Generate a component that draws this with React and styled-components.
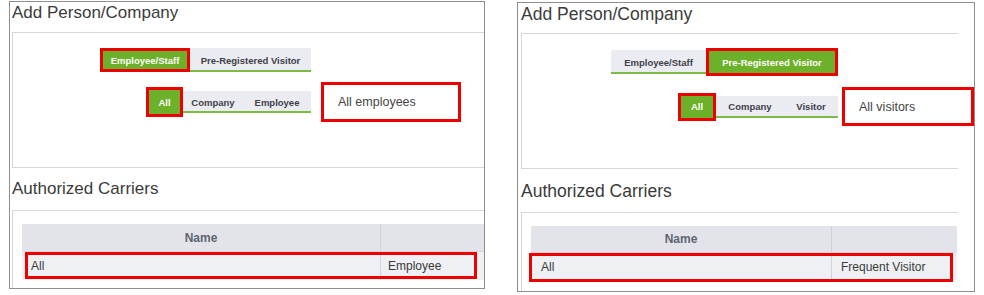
import React from 'react';
import styled, { createGlobalStyle } from 'styled-components';

const GlobalStyle = createGlobalStyle`
  body {
    margin: 0;
    background: #ffffff;
    font-family: "Liberation Sans", Arial, sans-serif;
  }
`;

//page holds the two side by side screenshots
const Page = styled.div`
  display: flex;
  align-items: flex-start;
  gap: ${p => p.gap}px;
  padding: 1px 0 0 9px;
  width: 984px;
  height: 295px;
  box-sizing: border-box;
  overflow: hidden;
`;

const Panel = styled.div`
  display: flex;
  flex-direction: column;
  width: ${p => p.w}px;
  height: ${p => p.h}px;
  margin-top: ${p => p.top}px;
  border: 1px solid #8e8e8e;
  box-sizing: border-box;
  overflow: hidden;
  padding-left: ${p => p.indent}px;
`;

const SectionTitle = styled.div`
  font-size: ${p => p.size}px;
  line-height: 20px;
  color: #3b3b3b;
  margin-top: ${p => p.top}px;
  white-space: nowrap;
`;

const InnerBox = styled.div`
  display: flex;
  flex-direction: column;
  margin-top: ${p => p.top}px;
  margin-right: ${p => p.right}px;
  height: ${p => (p.h ? `${p.h}px` : 'auto')};
  flex: ${p => (p.fill ? 1 : 'none')};
  border: 1px solid #d6d6d6;
  border-right: none;
  border-bottom: ${p => (p.fill ? 'none' : '1px solid #d6d6d6')};
  box-sizing: border-box;
  padding: ${p => p.pad};
`;

//tabs area: tabs column right aligned, description box beside it
const TabGrid = styled.div`
  display: grid;
  grid-template-columns: ${p => p.col}px auto;
  row-gap: ${p => p.gap}px;
  align-items: center;
`;

const TabGroup = styled.div`
  display: flex;
  justify-content: flex-end;
  align-items: center;
`;

const Tab = styled.div`
  display: flex;
  align-items: center;
  justify-content: center;
  width: ${p => p.w}px;
  height: ${p => p.h}px;
  box-sizing: border-box;
  font-size: 9.5px;
  font-weight: bold;
  white-space: nowrap;
  color: ${p => (p.active ? '#ffffff' : '#3e3f48')};
  background: ${p => (p.active ? '#6db02a' : '#ebebf2')};
  border: ${p => (p.active ? '3px solid #ec0000' : 'none')};
  border-bottom: ${p => (p.active ? '3px solid #ec0000' : '2px solid #7dbb42')};
  padding-top: ${p => (p.active ? 0 : 2)}px;
`;

const DescBox = styled.div`
  display: flex;
  align-items: center;
  margin-left: ${p => p.gap}px;
  width: ${p => p.w}px;
  height: ${p => p.h}px;
  box-sizing: border-box;
  border: 3px solid #ec0000;
  padding-left: ${p => p.pad}px;
  font-size: 12.5px;
  color: #454545;
`;

//authorized carriers table
const Table = styled.div`
  display: flex;
  flex-direction: column;
  width: ${p => p.w}px;
`;

const HeadRow = styled.div`
  display: grid;
  grid-template-columns: ${p => p.col}px 1fr;
  height: ${p => p.h}px;
  background: #e2e4ea;
`;

const HeadCell = styled.div`
  display: flex;
  align-items: center;
  justify-content: center;
  font-size: 12px;
  font-weight: bold;
  color: #5e6571;
  & + & {
    border-left: 1px solid #cdd0d8;
  }
`;

const BodyRow = styled.div`
  position: relative;
  display: grid;
  grid-template-columns: ${p => p.col}px 1fr;
  height: ${p => p.h}px;
  background: #eef0f4;
  border-top: 1px solid #d5d8df;
  box-sizing: border-box;
`;

const BodyCell = styled.div`
  display: flex;
  align-items: center;
  padding-left: ${p => p.pad}px;
  font-size: 12px;
  color: #3a3a3a;
  white-space: nowrap;
  & + & {
    border-left: 1px solid #d0d3da;
  }
`;

//red annotation frame over the selected row
const RowMark = styled.div`
  position: absolute;
  top: ${p => p.t}px;
  left: ${p => p.l}px;
  right: ${p => p.r}px;
  bottom: ${p => p.b}px;
  border: 3px solid #ec0000;
  pointer-events: none;
`;

const shots = [
  {
    key: 'staff',
    panel: { w: 476, h: 288, top: 0, indent: 2 },
    titleSize: 17,
    boxRight: -10,
    tabCol: 298,
    rowGap: 10,
    row1: [
      { label: 'Employee/Staff', w: 90, h: 24, active: true },
      { label: 'Pre-Registered Visitor', w: 121, h: 24 },
    ],
    row2: [
      { label: 'All', w: 37, h: 30, active: true },
      { label: 'Company', w: 60, h: 22 },
      { label: 'Employee', w: 68, h: 22 },
    ],
    desc: { text: 'All employees', w: 140, h: 40, gap: 10, pad: 14 },
    table: { w: 500, col: 358, headH: 27, rowH: 29, pad: 9, pad2: 7, value: 'Employee' },
    mark: { t: 0, l: 3, r: 45, b: 1 },
    top1: 15,
    title2Top: 11,
  },
  {
    key: 'visitor',
    panel: { w: 458, h: 290, top: 1, indent: 3 },
    titleSize: 17.5,
    boxRight: 16,
    tabCol: 316,
    rowGap: 11,
    row1: [
      { label: 'Employee/Staff', w: 95, h: 24 },
      { label: 'Pre-Registered Visitor', w: 132, h: 28, active: true },
    ],
    row2: [
      { label: 'All', w: 38, h: 28, active: true },
      { label: 'Company', w: 68, h: 22 },
      { label: 'Visitor', w: 54, h: 22 },
    ],
    desc: { text: 'All visitors', w: 132, h: 39, gap: 4, pad: 14 },
    table: { w: 426, col: 300, headH: 26, rowH: 28, pad: 10, pad2: 9, value: 'Frequent Visitor' },
    mark: { t: 0, l: -2, r: 4, b: -2 },
    top1: 14,
    title2Top: 12,
  },
];

const Shot = ({ s }) => (
  <Panel {...s.panel}>
    <SectionTitle size={s.titleSize} top={1}>Add Person/Company</SectionTitle>
    <InnerBox top={9} right={s.boxRight} h={136} pad={`${s.top1}px 0 0 0`}>
      <TabGrid col={s.tabCol} gap={s.rowGap}>
        <TabGroup>
          {s.row1.map(t => (
            <Tab key={t.label} w={t.w} h={t.h} active={t.active}>{t.label}</Tab>
          ))}
        </TabGroup>
        <div />
        <TabGroup>
          {s.row2.map(t => (
            <Tab key={t.label} w={t.w} h={t.h} active={t.active}>{t.label}</Tab>
          ))}
        </TabGroup>
        <DescBox w={s.desc.w} h={s.desc.h} gap={s.desc.gap} pad={s.desc.pad}>
          {s.desc.text}
        </DescBox>
      </TabGrid>
    </InnerBox>
    <SectionTitle size={s.titleSize} top={s.title2Top}>Authorized Carriers</SectionTitle>
    <InnerBox top={11} right={s.boxRight} fill pad="13px 0 0 9px">
      <Table w={s.table.w}>
        <HeadRow col={s.table.col} h={s.table.headH}>
          <HeadCell>Name</HeadCell>
          <HeadCell />
        </HeadRow>
        <BodyRow col={s.table.col} h={s.table.rowH}>
          <BodyCell pad={s.table.pad}>All</BodyCell>
          <BodyCell pad={s.table.pad2}>{s.table.value}</BodyCell>
          <RowMark {...s.mark} />
        </BodyRow>
      </Table>
    </InnerBox>
  </Panel>
);

export default function App() {
  return (
    <>
      <GlobalStyle />
      <Page gap={32}>
        {shots.map(s => <Shot key={s.key} s={s} />)}
      </Page>
    </>
  );
}
